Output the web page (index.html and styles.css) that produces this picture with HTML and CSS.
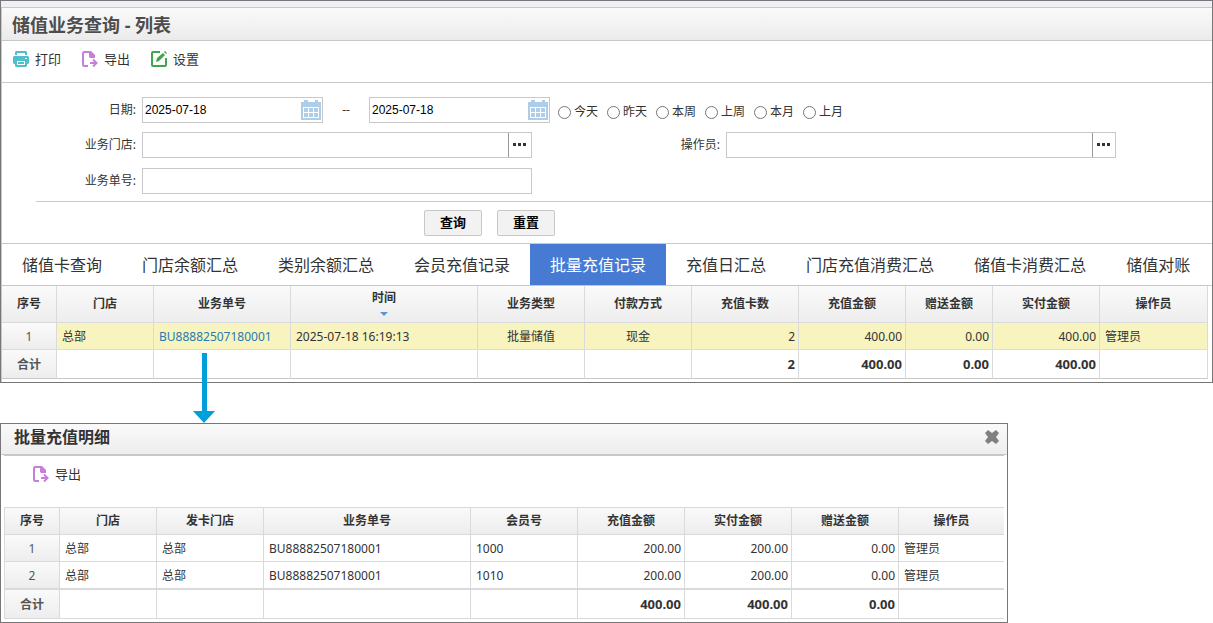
FILE: index.html
```html
<!DOCTYPE html>
<html lang="zh-CN">
<head>
  <meta charset="UTF-8">
  <meta name="viewport" content="width=device-width, initial-scale=1">
  <title>储值业务查询 - 列表</title>
  <link rel="stylesheet" href="styles.css">
</head>
<body>

  <!-- 图标 -->
  <svg class="sprite" aria-hidden="true">
    <symbol id="icon-print" viewBox="0 0 16 16">
      <path fill="#50becb" fill-rule="evenodd" d="M3 0h10l1 1v3h-2V2H4v2H2V1zM1 5h14l1 1v6l-1 1h-1v2l-1 1H3l-1-1v-2H1l-1-1V6zm11 2v1h2V7zM4 10v4h8v-4z"/>
      <path fill="#50becb" d="M5 11h6v2H5z"/>
    </symbol>
    <symbol id="icon-export" viewBox="0 0 16 16">
      <path fill="none" stroke="#c77ddb" stroke-width="2" d="M6 15H2.5Q1 15 1 13.500V2.500Q1 1 2.500 1H8"/>
      <path fill="#c77ddb" d="M7 0h2l4 4v3H8L7 6z"/>
      <path fill="none" stroke="#c77ddb" stroke-width="2" d="M8 12h6M11 8.500L14.500 12 11 15.500"/>
    </symbol>
    <symbol id="icon-setting" viewBox="0 0 16 16">
      <path fill="none" stroke="#3fa64b" stroke-width="2" d="M9 1H2Q1 1 1 2V14Q1 15 2 15H14Q15 15 15 14V7"/>
      <path fill="#3fa64b" d="M5 11l1-4 6-5 2 2-6 6zM13 1l1-1 2 2-1 1z"/>
    </symbol>
    <symbol id="icon-calendar" viewBox="0 0 20 20">
      <path fill="#aecde8" d="M0 2h3V0h4v2h7V0h3v2h3v18H0z"/>
      <path fill="#fff" d="M2 7h16v11H2z"/>
      <path fill="#aecde8" d="M3 8h4v4H3zM8 8h4v4H8zM13 8h4v4h-4zM3 13h4v4H3zM8 13h4v4H8zM13 13h4v4h-4z"/>
    </symbol>
  </svg>

  <!-- 列表窗口 -->
  <div class="window">
    <h1 class="window-title">储值业务查询 - 列表</h1>

    <div class="toolbar">
      <button type="button" class="tool-btn"><svg><use href="#icon-print"/></svg>打印</button>
      <button type="button" class="tool-btn"><svg><use href="#icon-export"/></svg>导出</button>
      <button type="button" class="tool-btn"><svg><use href="#icon-setting"/></svg>设置</button>
    </div>

    <form class="search-form">
      <div class="form-row date-row">
        <label class="form-label" for="dateStart">日期:</label>
        <div class="field date-field">
          <input type="text" id="dateStart" value="2025-07-18">
          <svg><use href="#icon-calendar"/></svg>
        </div>
        <span class="date-sep">--</span>
        <div class="field date-field">
          <input type="text" id="dateEnd" aria-label="结束日期" value="2025-07-18">
          <svg><use href="#icon-calendar"/></svg>
        </div>
        <div class="radios">
          <label><input type="radio" name="range">今天</label>
          <label><input type="radio" name="range">昨天</label>
          <label><input type="radio" name="range">本周</label>
          <label><input type="radio" name="range">上周</label>
          <label><input type="radio" name="range">本月</label>
          <label><input type="radio" name="range">上月</label>
        </div>
      </div>
      <div class="form-row">
        <label class="form-label" for="shop">业务门店:</label>
        <div class="field">
          <input type="text" id="shop">
          <button type="button" class="more-btn" aria-label="选择门店"></button>
        </div>
        <label class="form-label" for="operator">操作员:</label>
        <div class="field">
          <input type="text" id="operator">
          <button type="button" class="more-btn" aria-label="选择操作员"></button>
        </div>
      </div>
      <div class="form-row">
        <label class="form-label" for="billNo">业务单号:</label>
        <div class="field"><input type="text" id="billNo"></div>
      </div>
      <div class="form-actions">
        <button type="submit" class="btn">查询</button>
        <button type="reset" class="btn">重置</button>
      </div>
    </form>

    <nav class="tabs">
      <a href="#">储值卡查询</a>
      <a href="#">门店余额汇总</a>
      <a href="#">类别余额汇总</a>
      <a href="#">会员充值记录</a>
      <a href="#" class="active">批量充值记录</a>
      <a href="#">充值日汇总</a>
      <a href="#">门店充值消费汇总</a>
      <a href="#">储值卡消费汇总</a>
      <a href="#">储值对账</a>
    </nav>

    <div class="main-grid">
      <table>
        <colgroup>
          <col class="w55"><col class="w97"><col class="w137"><col class="w187"><col class="w107"><col class="w107">
          <col class="w107"><col class="w107"><col class="w87"><col class="w107"><col>
        </colgroup>
        <thead>
          <tr>
            <th>序号</th>
            <th>门店</th>
            <th>业务单号</th>
            <th class="sorted">时间</th>
            <th>业务类型</th>
            <th>付款方式</th>
            <th>充值卡数</th>
            <th>充值金额</th>
            <th>赠送金额</th>
            <th>实付金额</th>
            <th>操作员</th>
          </tr>
        </thead>
        <tbody>
          <tr class="selected">
            <td class="idx">1</td>
            <td>总部</td>
            <td><a href="#detail">BU88882507180001</a></td>
            <td>2025-07-18 16:19:13</td>
            <td class="center">批量储值</td>
            <td class="center">现金</td>
            <td class="num">2</td>
            <td class="num">400.00</td>
            <td class="num">0.00</td>
            <td class="num">400.00</td>
            <td>管理员</td>
          </tr>
        </tbody>
        <tfoot>
          <tr>
            <td class="idx">合计</td>
            <td></td>
            <td></td>
            <td></td>
            <td></td>
            <td></td>
            <td class="num">2</td>
            <td class="num">400.00</td>
            <td class="num">0.00</td>
            <td class="num">400.00</td>
            <td></td>
          </tr>
        </tfoot>
      </table>
    </div>
  </div>

  <!-- 从单号指向明细的箭头 -->
  <div class="connector">
    <svg viewBox="0 0 22 70"><path fill="#009fdc" d="M9 0h5v58h8L11 70 0 58h9z"/></svg>
  </div>

  <!-- 明细窗口 -->
  <div class="dialog" id="detail">
    <div class="dialog-title">
      <h2>批量充值明细</h2>
      <button type="button" class="close-btn" aria-label="关闭">
        <svg viewBox="0 0 14 14"><path fill="#808080" d="M3 0l4 3 4-3 3 3-3 4 3 4-3 3-4-3-4 3-3-3 3-4-3-4z"/></svg>
      </button>
    </div>
    <div class="dialog-body">
      <div class="dialog-toolbar">
        <button type="button" class="tool-btn"><svg><use href="#icon-export"/></svg>导出</button>
      </div>
      <table class="detail-table">
        <colgroup>
          <col class="w55"><col class="w97"><col class="w107"><col class="w207"><col class="w107">
          <col class="w107"><col class="w107"><col class="w107"><col>
        </colgroup>
        <thead>
          <tr>
            <th>序号</th>
            <th>门店</th>
            <th>发卡门店</th>
            <th>业务单号</th>
            <th>会员号</th>
            <th>充值金额</th>
            <th>实付金额</th>
            <th>赠送金额</th>
            <th>操作员</th>
          </tr>
        </thead>
        <tbody>
          <tr>
            <td class="idx">1</td>
            <td>总部</td>
            <td>总部</td>
            <td>BU88882507180001</td>
            <td>1000</td>
            <td class="num">200.00</td>
            <td class="num">200.00</td>
            <td class="num">0.00</td>
            <td>管理员</td>
          </tr>
          <tr>
            <td class="idx">2</td>
            <td>总部</td>
            <td>总部</td>
            <td>BU88882507180001</td>
            <td>1010</td>
            <td class="num">200.00</td>
            <td class="num">200.00</td>
            <td class="num">0.00</td>
            <td>管理员</td>
          </tr>
        </tbody>
        <tfoot>
          <tr>
            <td class="idx">合计</td>
            <td></td>
            <td></td>
            <td></td>
            <td></td>
            <td class="num">400.00</td>
            <td class="num">400.00</td>
            <td class="num">0.00</td>
            <td></td>
          </tr>
        </tfoot>
      </table>
    </div>
  </div>

</body>
</html>
```
FILE: styles.css
```css
* {
  box-sizing: border-box;
}

body {
  margin: 0;
  background: #fff;
  color: #333;
  font-family: "Noto Sans", "Noto Sans CJK SC", sans-serif;
  font-size: 12px;
  line-height: 18px;
}

h1, h2 {
  margin: 0;
}

a {
  color: inherit;
  text-decoration: none;
}

button, input {
  font-family: inherit;
  font-size: 12px;
}

.sprite {
  display: none;
}

/* 列表窗口 */
.window {
  border: 1px solid #777;
  padding-top: 6px;
  background: #f0eff5;
}

.window-title {
  height: 34px;
  padding-left: 10px;
  border: 1px solid #c8c8c8;
  border-right: none;
  background: linear-gradient(#fafafa, #ebebeb);
  color: #4d4d4d;
  font-size: 18px;
  line-height: 34px;
}

.toolbar {
  display: flex;
  gap: 21px;
  height: 42px;
  padding: 8px 11px 0;
  border-left: 1px solid #c8c8c8;
  border-bottom: 1px solid #c8c8c8;
  background: #fff;
}

.tool-btn {
  display: flex;
  align-items: center;
  gap: 6px;
  height: 20px;
  padding: 0;
  border: none;
  background: none;
  color: #333;
  font-size: 13px;
  line-height: 18px;
  cursor: pointer;
}

.tool-btn svg {
  width: 16px;
  height: 16px;
}

/* 查询条件 */
.search-form {
  padding-top: 14px;
  border-left: 1px solid #c8c8c8;
  background: #fff;
}

.form-row {
  display: grid;
  grid-template-columns: 140px 390px 194px 390px;
  align-items: center;
  margin-bottom: 10px;
}

.date-row {
  display: flex;
  margin-bottom: 9px;
}

.form-label {
  padding-right: 6px;
  text-align: right;
}

.date-row .form-label {
  width: 140px;
}

.field {
  display: flex;
  align-items: center;
  height: 26px;
  border: 1px solid #c8c8c8;
  background: #fff;
}

.field input {
  flex: 1;
  min-width: 0;
  height: 24px;
  padding: 0 2px;
  border: none;
  outline: none;
  background: none;
  color: #000;
  font-family: "Liberation Sans", "Noto Sans CJK SC", sans-serif;
}

.date-field {
  width: 181px;
  padding-right: 1px;
}

.date-field svg {
  width: 20px;
  height: 20px;
}

.date-sep {
  width: 46px;
  text-align: center;
}

.more-btn {
  width: 23px;
  height: 24px;
  padding: 0;
  border: none;
  border-left: 1px solid #999;
  background: radial-gradient(#333, #333) 4px 10px / 3px 3px no-repeat,
    radial-gradient(#333, #333) 9px 10px / 3px 3px no-repeat,
    radial-gradient(#333, #333) 14px 10px / 3px 3px no-repeat;
  cursor: pointer;
}

.radios {
  display: flex;
  gap: 9px;
  padding: 3px 0 0 8px;
}

.radios label {
  display: flex;
  align-items: center;
  gap: 3px;
}

.radios input {
  width: 13px;
  height: 13px;
  margin: 2px 0 0;
}

.form-actions {
  display: flex;
  gap: 15px;
  height: 42px;
  margin: -3px 0 0 34px;
  padding: 8px 0 0 388px;
  border-top: 1px solid #c8c8c8;
}

.btn {
  width: 58px;
  height: 26px;
  padding: 0 0 3px;
  border: 1px solid #c8c8c8;
  border-radius: 2px;
  background: #f2f2f2;
  color: #000;
  font-size: 13px;
  font-weight: bold;
  cursor: pointer;
}

.btn:hover {
  background: #e6e6e6;
}

/* 选项卡 */
.tabs {
  display: flex;
  height: 43px;
  border: 1px solid #c8c8c8;
  border-right: none;
  background: #fff;
  font-size: 16px;
  line-height: 43px;
  white-space: nowrap;
}

.tabs a {
  height: 41px;
  padding: 0 20px;
}

.tabs a.active {
  background: #467ad3;
  color: #fff;
}

/* 表格 */
.main-grid {
  padding: 0 4px 3px 0;
  border-left: 1px solid #c8c8c8;
  background: #fff;
}

table {
  width: 100%;
  border-collapse: separate;
  border-spacing: 0;
  table-layout: fixed;
}

.w55 { width: 55px; }
.w87 { width: 87px; }
.w97 { width: 97px; }
.w107 { width: 107px; }
.w137 { width: 137px; }
.w187 { width: 187px; }
.w207 { width: 207px; }

th, td {
  height: 27px;
  padding: 2px 3px 0 5px;
  border-right: 1px solid #dadada;
  border-bottom: 1px solid #dadada;
  text-align: left;
  white-space: nowrap;
}

th {
  height: 37px;
  padding: 0;
  background: linear-gradient(#fafafa, #ededed);
  text-align: center;
}

th.sorted {
  line-height: 16px;
}

th.sorted::after {
  content: "";
  display: block;
  width: 0;
  margin: 6px auto 3px;
  border: 4px solid transparent;
  border-top-color: #5b93d3;
  border-bottom: none;
}

td.idx {
  padding: 2px 0 0;
  background: linear-gradient(#fafafa, #ededed);
  color: #555;
  text-align: center;
}

td.center {
  padding: 2px 0 0;
  text-align: center;
}

.num {
  text-align: right;
}

.selected td:not(.idx) {
  background: #f7f4c0;
}

.selected a {
  color: #2a7ab0;
}

tfoot td {
  height: 29px;
  border-bottom-color: #c8c8c8;
  font-weight: bold;
}

tfoot .num {
  padding-top: 0;
  font-size: 13px;
}

/* 箭头 */
.connector {
  position: relative;
  height: 40px;
}

.connector svg {
  position: absolute;
  left: 193px;
  bottom: 0;
  width: 22px;
  height: 70px;
}

/* 明细窗口 */
.dialog {
  max-width: 1008px;
  border: 1px solid #777;
  background: #fff;
}

.dialog-title {
  display: flex;
  align-items: center;
  justify-content: space-between;
  height: 31px;
  padding: 0 8px 4px 13px;
  border-bottom: 1px solid #c8c8c8;
  background: linear-gradient(#fafafa, #ededed);
}

.dialog-title h2 {
  font-size: 16px;
  line-height: 24px;
}

.close-btn {
  width: 14px;
  height: 14px;
  padding: 0;
  border: none;
  background: none;
  cursor: pointer;
}

.close-btn svg {
  display: block;
}

.dialog-body {
  margin: 0 3px 3px;
  border-top: 1px solid #c8c8c8;
}

.dialog-toolbar {
  height: 51px;
  padding: 8px 29px 0;
}

.detail-table {
  border-top: 1px solid #dadada;
  border-left: 1px solid #dadada;
}

.detail-table th {
  height: 27px;
}

.detail-table th:last-child,
.detail-table td:last-child {
  border-right: none;
}

.detail-table tfoot td {
  height: 30px;
  border-top: 1px solid #dadada;
  border-bottom-color: #dadada;
}
```
